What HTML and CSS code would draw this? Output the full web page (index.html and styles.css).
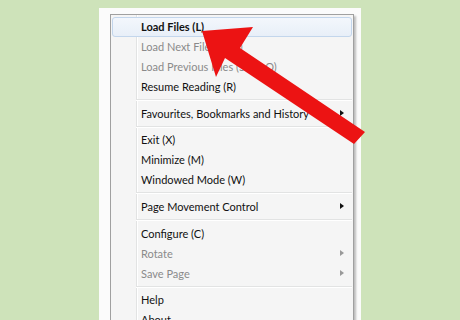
FILE: index.html
```html
<!DOCTYPE html>
<html lang="en">
<head>
  <meta charset="UTF-8">
  <title>Menu</title>
  <link rel="stylesheet" href="styles.css">
</head>
<body>
  <div class="panel">
    <div class="menu">
      <div class="item active bold">Load Files (L)</div>
      <div class="item off">Load Next File (Alt-L)</div>
      <div class="item off">Load Previous Files (Shift-O)</div>
      <div class="item">Resume Reading (R)</div>
      <div class="sep"></div>
      <div class="item sub">Favourites, Bookmarks and History</div>
      <div class="sep"></div>
      <div class="item">Exit (X)</div>
      <div class="item">Minimize (M)</div>
      <div class="item">Windowed Mode (W)</div>
      <div class="sep"></div>
      <div class="item sub">Page Movement Control</div>
      <div class="sep"></div>
      <div class="item">Configure (C)</div>
      <div class="item sub off">Rotate</div>
      <div class="item sub off">Save Page</div>
      <div class="sep"></div>
      <div class="item">Help</div>
      <div class="item">About</div>
    </div>
  </div>

  <svg class="pointer" width="460" height="320" viewBox="0 0 460 320">
    <polygon points="202,31 253,27 240,48 365,132 354,144 225,58 216,77" fill="#ec1313"/>
  </svg>
</body>
</html>
```

FILE: styles.css
```css
* { box-sizing: border-box; }

body {
  margin: 0;
  height: 320px;
  overflow: hidden;
  background: #cee3ba;
  font-family: 'Lato', 'Liberation Sans', sans-serif;
  font-size: 11px;
  color: #111;
}

.panel {
  margin: 8px 0 0 99px;
  width: 262px;
  height: 400px;
  background: #fbfbfb;
  padding: 6px 0 0 11px;
}

.menu {
  width: 244px;
  border: 1px solid #a0a0a0;
  background: #f5f5f5 linear-gradient(to right, transparent 25px, #e2e3e3 25px, #e2e3e3 26px, #fff 26px, #fff 27px, transparent 27px);
  box-shadow: 2px 2px 2px rgba(0, 0, 0, 0.25);
  padding: 2px 1px;
}

.item {
  position: relative;
  height: 20px;
  line-height: 17px;
  padding-left: 28px;
  border: 1px solid transparent;
  border-radius: 3px;
  white-space: nowrap;
}

.item.bold { font-weight: bold; }

.item.off { color: #8a8a8a; }

.item.active {
  border-color: #c3d6ec;
  background: linear-gradient(#f3f7fc, #e8eff8);
}

.item.sub::after {
  content: "";
  position: absolute;
  right: 7px;
  top: 5px;
  border-left: 4px solid #111;
  border-top: 3.5px solid transparent;
  border-bottom: 3.5px solid transparent;
}

.item.sub.off::after { border-left-color: #999; }

.sep {
  height: 6.67px;
  margin-left: 24px;
  background: linear-gradient(transparent 2px, #e2e3e3 2px, #e2e3e3 3px, #fff 3px, #fff 4px, transparent 4px);
}

.pointer {
  position: absolute;
  top: 0;
  left: 0;
}
```
